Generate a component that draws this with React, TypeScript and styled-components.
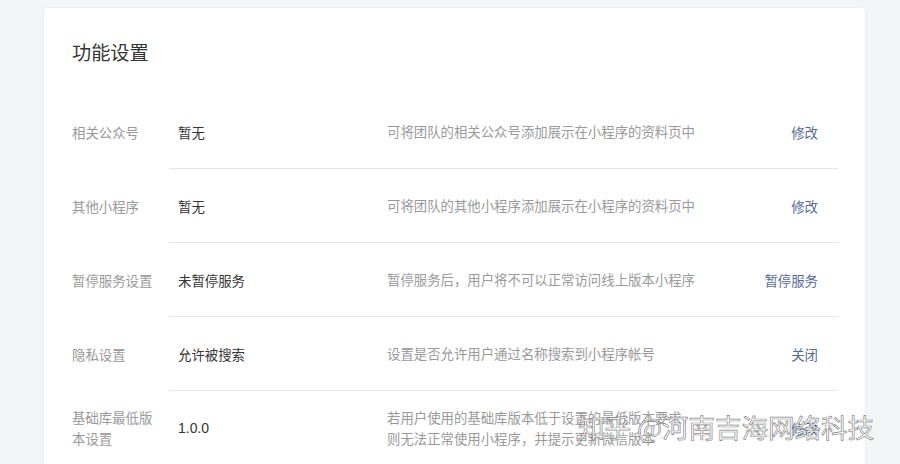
import React from 'react'
import styled, {createGlobalStyle} from 'styled-components'

const GlobalStyle=createGlobalStyle`
html,body{
    margin:0;
    padding:0;
    background:#f4f5f7;
    font-family:"Noto Sans CJK SC","Noto Sans",sans-serif;
}
`

interface ISetting{
    label:string;
    value:string;
    desc:string[];
    action:string;
}

const settings:ISetting[]=[
    {label:'相关公众号',value:'暂无',desc:['可将团队的相关公众号添加展示在小程序的资料页中'],action:'修改'},
    {label:'其他小程序',value:'暂无',desc:['可将团队的其他小程序添加展示在小程序的资料页中'],action:'修改'},
    {label:'暂停服务设置',value:'未暂停服务',desc:['暂停服务后，用户将不可以正常访问线上版本小程序'],action:'暂停服务'},
    {label:'隐私设置',value:'允许被搜索',desc:['设置是否允许用户通过名称搜索到小程序帐号'],action:'关闭'},
    {label:'基础库最低版本设置',value:'1.0.0',desc:['若用户使用的基础库版本低于设置的最低版本要求，','则无法正常使用小程序，并提示更新微信版本'],action:'修改'},
]

export default function App():React.ReactElement{
    return (
        <Page>
            <GlobalStyle/>
            <Card>
                <Title>功能设置</Title>
                {settings.map((s)=>(
                    <Row key={s.label}>
                        <Label>{s.label}</Label>
                        <Content>
                            <Value isNumber={/^[0-9.]+$/.test(s.value)}>{s.value}</Value>
                            <Desc>
                                {s.desc.map((line)=>(<div key={line}>{line}</div>))}
                            </Desc>
                            <Action href="#">{s.action}</Action>
                        </Content>
                    </Row>
                ))}
            </Card>
            {/* site watermark stamped over the screenshot */}
            <Watermark>知乎 @河南吉海网络科技</Watermark>
        </Page>
    )
}

const Page=styled.div`
position:relative;
width:900px;
height:464px;
overflow:hidden;
padding:7px 34px 0 43px;
box-sizing:border-box;
`

const Card=styled.div`
background:#fff;
border:1px solid #eceef1;
border-radius:4px;
padding:32px 27px 40px 28px;
box-sizing:border-box;
`

const Title=styled.h2`
margin:0 0 31px 0;
font-size:19.2px;
line-height:24px;
font-weight:400;
color:#353535;
`

const Row=styled.div`
display:flex;
align-items:stretch;
`

const Label=styled.div`
width:97px;
flex:none;
padding-right:10px;
box-sizing:border-box;
display:flex;
align-items:center;
font-size:13.4px;
line-height:21px;
color:#999;
`

const Content=styled.div`
flex:1;
display:flex;
align-items:center;
height:73px;
border-bottom:1px solid #e7e7eb;
padding:0 20px 0 9px;
`

interface IValueProps{
    isNumber:boolean;
}

const Value=styled.div<IValueProps>`
width:209px;
flex:none;
font-size:${({isNumber}):string=>isNumber?'14px':'13.4px'};
font-family:${({isNumber}):string=>isNumber?'"Liberation Sans",Arial,sans-serif':'inherit'};
color:#353535;
`

const Desc=styled.div`
flex:1;
font-size:13.4px;
line-height:21px;
color:#9a9a9a;
`

const Action=styled.a`
flex:none;
font-size:13.4px;
color:#576b95;
text-decoration:none;
`

const Watermark=styled.div`
position:absolute;
left:578px;
top:410px;
font-size:26.5px;
line-height:34px;
color:rgba(255,255,255,0.85);
-webkit-text-stroke:0.7px rgba(90,90,90,0.75);
white-space:nowrap;
pointer-events:none;
`
